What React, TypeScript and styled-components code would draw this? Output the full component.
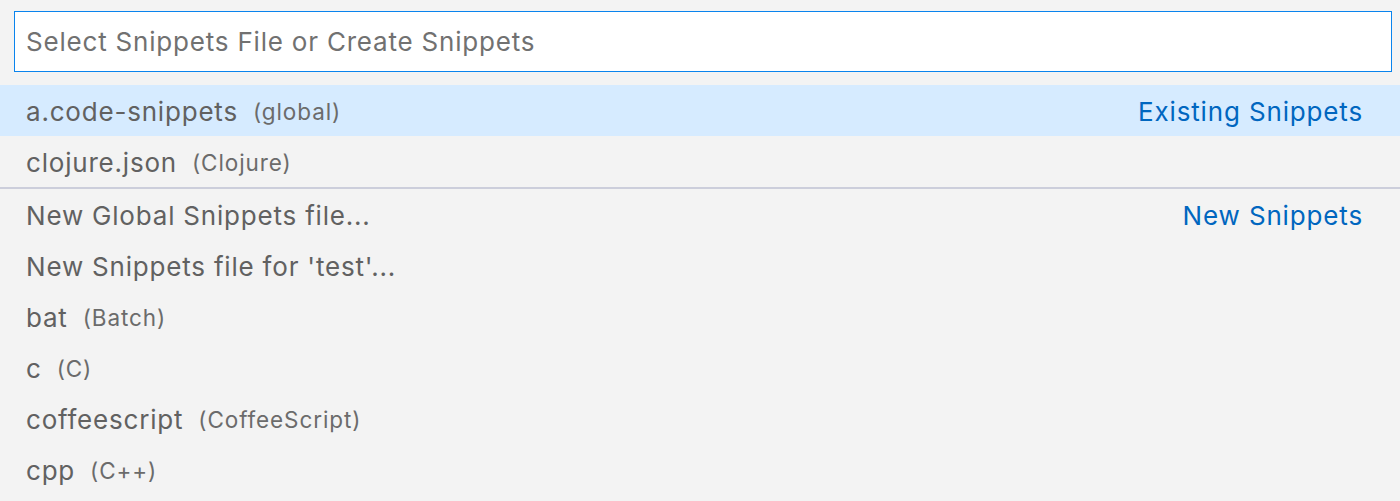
import React from "react";
import styled, { createGlobalStyle } from "styled-components";

const Global = createGlobalStyle`
  html, body { margin: 0; padding: 0; background: #f3f3f3; }
  body { font-family: Inter, "Noto Sans", sans-serif; -webkit-font-smoothing: antialiased; }
`;

const Widget = styled.div`
  width: 1400px;
  height: 501px;
  background: #f3f3f3;
  overflow: hidden;
  display: flex;
  flex-direction: column;
`;

const InputWrap = styled.div`
  padding: 11px 8px 0 14px;
  margin-bottom: 13px;
`;

const Input = styled.input`
  box-sizing: border-box;
  width: 100%;
  height: 61px;
  border: 1px solid #0a84ed;
  background: #ffffff;
  outline: none;
  padding: 0 11px;
  font-family: Inter, "Noto Sans", sans-serif;
  font-size: 26px;
  letter-spacing: 0.8px;
  color: #616161;
  &::placeholder { color: #717171; }
`;

const List = styled.div`
  display: flex;
  flex-direction: column;
`;

const Row = styled.div<{ $focused?: boolean; $separator?: boolean }>`
  box-sizing: content-box;
  height: 51px;
  display: flex;
  align-items: center;
  padding: 0 37px 0 26px;
  background: ${(p) => (p.$focused ? "#d6ebff" : "transparent")};
  border-top: ${(p) => (p.$separator ? "2px solid #cccedb" : "none")};
`;

const Label = styled.span`
  font-size: 26px;
  letter-spacing: 0.8px;
  color: #616161;
  white-space: nowrap;
  padding-top: 2px;
`;

const Description = styled.span`
  font-size: 22.5px;
  letter-spacing: 0.9px;
  color: #6b6b6b;
  margin-left: 15px;
  white-space: nowrap;
  padding-top: 2px;
`;

const Group = styled.span`
  margin-left: auto;
  font-size: 26px;
  letter-spacing: 0.85px;
  color: #0066bf;
  white-space: nowrap;
  padding-top: 2px;
`;

type Item = { label: string; desc?: string; group?: string; focused?: boolean; separator?: boolean };

const items: Item[] = [
  { label: "a.code-snippets", desc: "(global)", group: "Existing Snippets", focused: true },
  { label: "clojure.json", desc: "(Clojure)" },
  { label: "New Global Snippets file...", group: "New Snippets", separator: true },
  { label: "New Snippets file for 'test'..." },
  { label: "bat", desc: "(Batch)" },
  { label: "c", desc: "(C)" },
  { label: "coffeescript", desc: "(CoffeeScript)" },
  { label: "cpp", desc: "(C++)" },
];

export default function App() {
  return (
    <>
      <Global />
      <Widget>
        <InputWrap>
          <Input placeholder="Select Snippets File or Create Snippets" />
        </InputWrap>
        <List>
          {items.map((it) => (
            <Row key={it.label} $focused={it.focused} $separator={it.separator}>
              <Label>{it.label}</Label>
              {it.desc && <Description>{it.desc}</Description>}
              {it.group && <Group>{it.group}</Group>}
            </Row>
          ))}
        </List>
      </Widget>
    </>
  );
}
